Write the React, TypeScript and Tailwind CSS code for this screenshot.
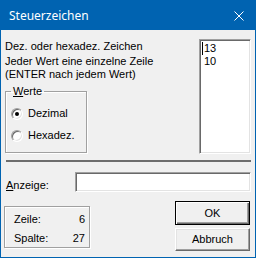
import React from "react";

const sunken =
  "border border-t-[#a0a0a0] border-l-[#a0a0a0] border-b-white border-r-white shadow-[inset_1px_1px_0_#696969,inset_-1px_-1px_0_#e3e3e3] bg-white";

const Radio: React.FC<{ checked?: boolean; label: string }> = ({ checked, label }) => (
  <div className="flex items-center h-[13px]">
    <div className="w-[12px] h-[12px] rounded-full border border-t-[#a0a0a0] border-l-[#a0a0a0] border-b-white border-r-white shadow-[inset_1px_1px_0_#696969,inset_-1px_-1px_0_#e3e3e3] bg-white flex items-center justify-center">
      {checked && <div className="w-[4px] h-[4px] rounded-full bg-black" />}
    </div>
    <span className="ml-[5px]">{label}</span>
  </div>
);

export default function App() {
  return (
    <div className="w-[256px] h-[258px] bg-[#0063b1] px-[1px] pb-[1px] flex flex-col text-[11px] leading-[13px] text-black font-['Liberation_Sans',Arial,sans-serif]">
      {/* title bar */}
      <div className="h-[30px] flex items-center justify-between pl-[8px] pr-[11px] pt-[1px] text-white">
        <span className="text-[12px] font-['Noto_Sans',sans-serif]">Steuerzeichen</span>
        <svg width="10" height="10" viewBox="0 0 10 10" className="mt-[1px]">
          <path d="M0.5 0.5 L9.5 9.5 M9.5 0.5 L0.5 9.5" stroke="white" strokeWidth="1" />
        </svg>
      </div>

      <div className="flex-1 bg-[#f0f0f0] flex flex-col">
        {/* top */}
        <div className="flex justify-between pt-[9px] pl-[4px] pr-[4px]">
          <div className="flex flex-col">
            <div className="mt-[1px]">Dez. oder hexadez. Zeichen</div>
            <div className="mt-[2px]">
              Jeder Wert eine einzelne Zeile
              <br />
              (ENTER nach jedem Wert)
            </div>
            <fieldset className="mt-[4px] w-[82px] h-[68px] border border-[#a0a0a0] shadow-[inset_1px_1px_0_#fff,1px_1px_0_#fff]">
              <legend className="ml-[5px] px-[2px]">
                <u>W</u>erte
              </legend>
              <div className="flex flex-col gap-[9px] pt-[9px] pl-[5px]">
                <Radio checked label="Dezimal" />
                <Radio label="Hexadez." />
              </div>
            </fieldset>
          </div>
          <div className={`w-[52px] h-[115px] ${sunken} pt-[2px] pl-[2px]`}>
            <div className="flex">
              <span className="w-[1px] h-[13px] bg-black mr-[1px]" />
              <span>13</span>
            </div>
            <div className="pl-[2px]">10</div>
          </div>
        </div>

        {/* separator */}
        <div className="mt-[6px] ml-[5px] mr-[4px] h-[2px] bg-[#6d6d6d]" />

        {/* Anzeige */}
        <div className="flex justify-between mt-[10px] pl-[5px] pr-[4px]">
          <span className="mt-[7px]">
            <u>A</u>nzeige:
          </span>
          <div className={`w-[176px] h-[20px] ${sunken}`} />
        </div>

        {/* bottom */}
        <div className="flex justify-between mt-[9px] pl-[3px] pr-[5px]">
          <div className="mt-[5px] w-[86px] h-[42px] border border-[#a0a0a0] shadow-[inset_1px_1px_0_#fff,1px_1px_0_#fff] pt-[6px] pl-[9px] pr-[4px] flex flex-col gap-[6px]">
            <div className="flex justify-between">
              <span>Zeile:</span>
              <span>6</span>
            </div>
            <div className="flex justify-between">
              <span>Spalte:</span>
              <span>27</span>
            </div>
          </div>
          <div className="flex flex-col gap-[3px]">
            <button className="w-[75px] h-[24px] border border-black shadow-[inset_1px_1px_0_#fff,inset_-1px_-1px_0_#696969,inset_-2px_-2px_0_#a0a0a0] bg-[#f0f0f0] flex items-center justify-center">
              OK
            </button>
            <button className="w-[75px] h-[23px] border border-t-white border-l-white border-r-[#696969] border-b-[#696969] shadow-[inset_-1px_-1px_0_#a0a0a0,inset_1px_1px_0_#e3e3e3] bg-[#f0f0f0] flex items-center justify-center">
              Abbruch
            </button>
          </div>
        </div>
      </div>
    </div>
  );
}
